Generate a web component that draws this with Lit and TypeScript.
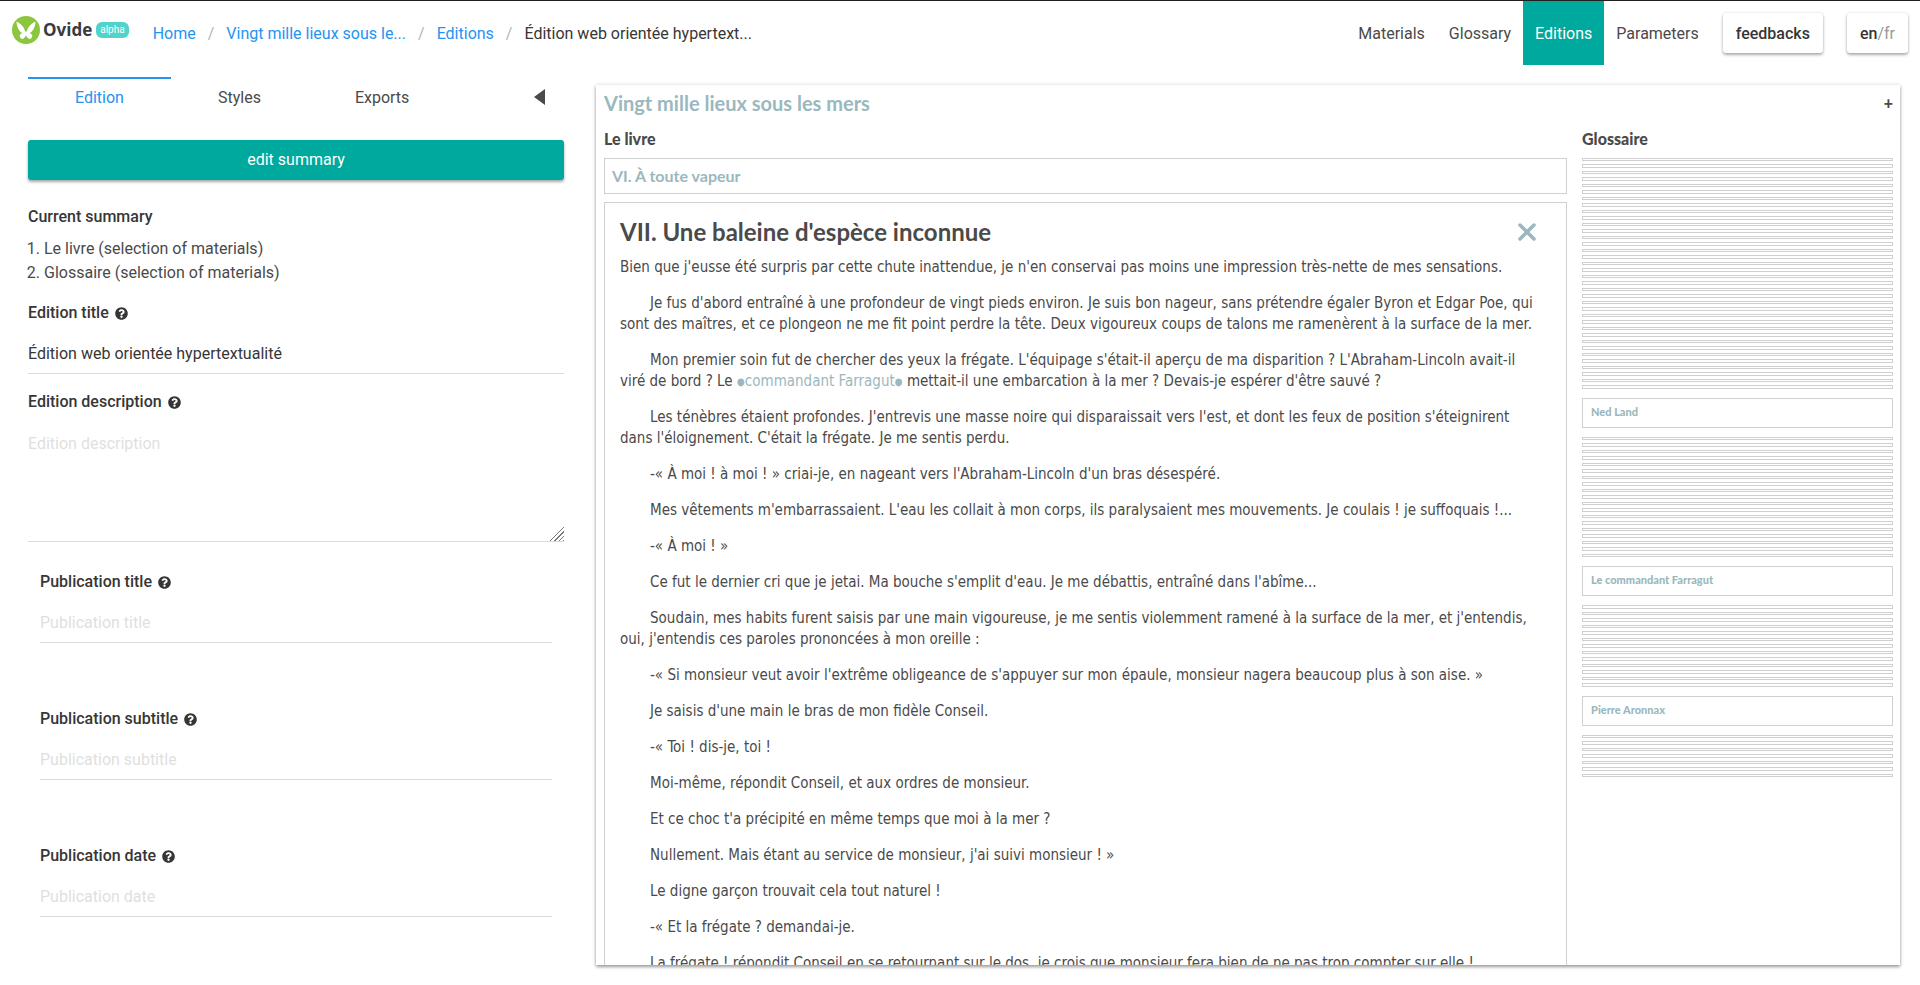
import { LitElement, html, svg, css, nothing } from "lit";
import { customElement, property } from "lit/decorators.js";

const CRUMBS = ["Home", "Vingt mille lieux sous le...", "Editions"];
const NAV = ["Materials", "Glossary", "Editions", "Parameters"];
const PUBLICATION_FIELDS = ["Publication title", "Publication subtitle", "Publication date"];

const dot = html`<span class="dot">●</span>`;

const PARAGRAPHS = [
  "Bien que j'eusse été surpris par cette chute inattendue, je n'en conservai pas moins une impression très-nette de mes sensations.",
  "Je fus d'abord entraîné à une profondeur de vingt pieds environ. Je suis bon nageur, sans prétendre égaler Byron et Edgar Poe, qui sont des maîtres, et ce plongeon ne me fit point perdre la tête. Deux vigoureux coups de talons me ramenèrent à la surface de la mer.",
  html`Mon premier soin fut de chercher des yeux la frégate. L'équipage s'était-il aperçu de ma disparition ? L'Abraham-Lincoln avait-il viré de bord ? Le <a class="entity" href="#farragut">${dot}commandant Farragut${dot}</a> mettait-il une embarcation à la mer ? Devais-je espérer d'être sauvé ?`,
  "Les ténèbres étaient profondes. J'entrevis une masse noire qui disparaissait vers l'est, et dont les feux de position s'éteignirent dans l'éloignement. C'était la frégate. Je me sentis perdu.",
  "-« À moi ! à moi ! » criai-je, en nageant vers l'Abraham-Lincoln d'un bras désespéré.",
  "Mes vêtements m'embarrassaient. L'eau les collait à mon corps, ils paralysaient mes mouvements. Je coulais ! je suffoquais !...",
  "-« À moi ! »",
  "Ce fut le dernier cri que je jetai. Ma bouche s'emplit d'eau. Je me débattis, entraîné dans l'abîme...",
  "Soudain, mes habits furent saisis par une main vigoureuse, je me sentis violemment ramené à la surface de la mer, et j'entendis, oui, j'entendis ces paroles prononcées à mon oreille :",
  "-« Si monsieur veut avoir l'extrême obligeance de s'appuyer sur mon épaule, monsieur nagera beaucoup plus à son aise. »",
  "Je saisis d'une main le bras de mon fidèle Conseil.",
  "-« Toi ! dis-je, toi !",
  "Moi-même, répondit Conseil, et aux ordres de monsieur.",
  "Et ce choc t'a précipité en même temps que moi à la mer ?",
  "Nullement. Mais étant au service de monsieur, j'ai suivi monsieur ! »",
  "Le digne garçon trouvait cela tout naturel !",
  "-« Et la frégate ? demandai-je.",
  "La frégate ! répondit Conseil en se retournant sur le dos, je crois que monsieur fera bien de ne pas trop compter sur elle !",
];

interface Group {
  bars: number;
  tallFirst?: boolean;
  entry?: string;
}

const GLOSSARY: Group[] = [
  { bars: 36, entry: "Ned Land" },
  { bars: 19, entry: "Le commandant Farragut" },
  { bars: 13, tallFirst: true, entry: "Pierre Aronnax" },
  { bars: 7 },
];

const helpIcon = svg`<svg class="help" viewBox="0 0 512 512" width="13" height="13" aria-hidden="true"><path fill="currentColor" d="M504 256c0 137-111 248-248 248S8 393 8 256 119 8 256 8s248 111 248 248zM262.700 90c-54.500 0-89.300 23-116.500 63.800-3.500 5.300-2.400 12.400 2.700 16.300l34.700 26.300c5.200 3.900 12.600 3 16.700-2.100 17.900-22.700 30.100-35.800 57.300-35.800 20.400 0 45.700 13.100 45.700 33 0 15-12.400 22.700-32.500 34C247.100 238.500 216 254.900 216 296v4c0 6.600 5.400 12 12 12h56c6.600 0 12-5.400 12-12v-1.300c0-28.500 83.200-29.600 83.200-106.700 0-58-60.200-102-116.500-102zM256 338c-25.400 0-46 20.600-46 46s20.600 46 46 46 46-20.600 46-46-20.600-46-46-46z"/></svg>`;

@customElement("top-bar")
export class TopBar extends LitElement {
  static styles = css`
    :host { display: block; }
    .bar { display: flex; align-items: stretch; justify-content: space-between; height: 64px; border-top: 1px solid #231f20; }
    .side { display: flex; align-items: stretch; }
    .brand { display: flex; align-items: center; gap: 3px; padding: 0 12px 6px; color: #363b45; text-decoration: none; font: 700 17px/24px "Open Sans", sans-serif; }
    .alpha { margin-left: 1px; padding: 0 4px; border-radius: 6px; background: #4fd3cb; color: #fff; font: 10px/16px Roboto, sans-serif; }
    .crumbs { display: flex; align-items: center; margin: 0; padding: 2px 0 0; list-style: none; }
    .crumb { display: flex; }
    .crumb a { padding: 0 12px; color: #2394f2; text-decoration: none; }
    .crumb + .crumb::before { content: "/"; color: #b5b5b5; }
    .crumb .here { color: #363636; }
    .nav { display: flex; align-items: stretch; }
    .link { display: flex; align-items: center; padding: 2px 12px 0; color: #4a4a4a; text-decoration: none; }
    .active { background: #00a99d; color: #fff; }
    .actions { display: flex; align-items: center; gap: 24px; padding: 0 12px; }
    button { height: 40px; padding: 2px 13px 0; border: 0; border-radius: 3px; background: #fff; box-shadow: 0 2px 3px rgba(0, 0, 0, 0.3), 0 0 3px rgba(0, 0, 0, 0.12); color: #363636; font: 500 16px/24px Roboto, sans-serif; }
    .off { color: #999; font-weight: 400; }
  `;

  render() {
    return html`<header class="bar">
      <div class="side">
        <a class="brand" href="#">
          <svg viewBox="0 0 28 28" width="28" height="28" aria-hidden="true">
            <circle cx="14" cy="14" r="14" fill="#8cc63f" />
            <path fill="#fff" d="M4.500 5.500C8 7 12 10.500 13.200 15.500h1.600C16 10.500 20 7 23.500 5.500c-.2 5-2.200 9.500-5.800 11.800 1.700.3 2.800 1.500 2.600 3-.2 1.500-1.500 2.700-3 2.600-1.300-.1-2.200-1.500-3.300-3.600-1.100 2.100-2 3.500-3.300 3.600-1.500.1-2.800-1.100-3-2.600-.2-1.500.9-2.700 2.600-3C6.700 15 4.700 10.500 4.500 5.500z" />
          </svg>
          <span>Ovide</span><span class="alpha">alpha</span>
        </a>
        <nav class="nav" aria-label="breadcrumb">
          <ul class="crumbs">
            ${CRUMBS.map((c) => html`<li class="crumb"><a href="#">${c}</a></li>`)}
            <li class="crumb"><a class="here" href="#" aria-current="page">Édition web orientée hypertext...</a></li>
          </ul>
        </nav>
      </div>
      <div class="side">
        <nav class="nav" aria-label="sections">
          ${NAV.map((n) => html`<a class="link ${n === "Editions" ? "active" : ""}" href="#">${n}</a>`)}
        </nav>
        <div class="actions">
          <button type="button">feedbacks</button>
          <button type="button">en<span class="off">/fr</span></button>
        </div>
      </div>
    </header>`;
  }
}

@customElement("edition-form")
export class EditionForm extends LitElement {
  static styles = css`
    :host { display: block; }
    .tabs { display: flex; align-items: stretch; margin-bottom: 23px; }
    .tab { height: 40px; padding: 0 47px; border: 0; border-top: 2px solid transparent; background: none; color: #4a4a4a; font: 16px/24px Roboto, sans-serif; }
    .tab.on { border-color: #2394f2; color: #2394f2; }
    .fold { display: flex; align-items: center; margin-left: auto; padding: 0 19px; border: 0; background: none; color: #4a4a4a; }
    .edit { display: block; width: 100%; height: 40px; border: 0; border-radius: 3px; background: #00a99d; box-shadow: 0 2px 3px rgba(0, 0, 0, 0.35); color: #fff; font: 16px/24px Roboto, sans-serif; }
    .title, label { display: flex; align-items: center; gap: 6px; margin: 0; color: #363636; font: 500 16px/24px Roboto, sans-serif; }
    .title { margin-top: 25px; }
    .summary { margin: 8px 0 16px; padding-left: 16px; }
    .field { margin-bottom: 16px; }
    .nested { margin-bottom: 40px; padding: 12px; }
    input, textarea { box-sizing: border-box; display: block; width: 100%; margin: 8px 0 0; padding: 8px 0; border: 0; border-bottom: 1px solid #dbdbdb; border-radius: 0; background: none; color: #363636; font: 16px/24px Roboto, sans-serif; outline: none; }
    input { height: 41px; }
    textarea { height: 120px; padding: 10px 0; resize: vertical; }
    textarea::-webkit-resizer { background: linear-gradient(135deg, #fff 52%, transparent 52%), repeating-linear-gradient(135deg, #fff 0 2px, #777 2px 3px); }
    ::placeholder { color: #dfdfdf; opacity: 1; }
    .help { flex: none; }
  `;

  private field(name: string, cls: string, value = "") {
    const id = name.toLowerCase().replace(/ /g, "-");
    return html`<div class="field ${cls}">
      <label for=${id}>${name} ${helpIcon}</label>
      <input id=${id} type="text" placeholder=${name} .value=${value} />
    </div>`;
  }

  render() {
    return html`
      <div class="tabs">
        <button type="button" class="tab on">Edition</button>
        <button type="button" class="tab">Styles</button>
        <button type="button" class="tab">Exports</button>
        <button type="button" class="fold" aria-label="Collapse">
          <svg width="11" height="16" viewBox="0 0 11 16" aria-hidden="true"><path d="M11 0v16L0 8z" fill="currentColor" /></svg>
        </button>
      </div>
      <button type="button" class="edit">edit summary</button>
      <h4 class="title">Current summary</h4>
      <ol class="summary">
        <li>Le livre (selection of materials)</li>
        <li>Glossaire (selection of materials)</li>
      </ol>
      ${this.field("Edition title", "", "Édition web orientée hypertextualité")}
      <div class="field">
        <label for="description">Edition description ${helpIcon}</label>
        <textarea id="description" placeholder="Edition description"></textarea>
      </div>
      ${PUBLICATION_FIELDS.map((f) => this.field(f, "nested"))}
    `;
  }
}

@customElement("edition-preview")
export class EditionPreview extends LitElement {
  @property({ attribute: false }) groups: Group[] = GLOSSARY;

  static styles = css`
    :host { display: block; box-sizing: border-box; min-height: 0; padding: 0 7px 0 8px; overflow: hidden; background: #fff; box-shadow: 0 2px 3px rgba(0, 0, 0, 0.35), 0 0 4px rgba(0, 0, 0, 0.14); color: #4a4a4a; font: 15px/21px "DejaVu Sans Condensed", "DejaVu Sans", sans-serif; }
    .head { display: flex; align-items: center; justify-content: space-between; height: 36px; }
    h1, h2, h3, .chapter, .entry, .more { font-family: Lato, sans-serif; font-weight: 700; }
    h1 { margin: 0; color: #9ab8be; font-size: 20px; line-height: 24px; }
    .more { padding: 0; border: 0; background: none; color: #4a4a4a; font-size: 16px; font-weight: 900; line-height: 24px; }
    .columns { display: grid; grid-template-columns: minmax(0, 963fr) minmax(0, 311fr); gap: 15px; align-items: start; }
    h2 { margin: 7px 0 9px; font-size: 16px; font-weight: 900; line-height: 21px; }
    .box { border: 1px solid #d0d0d0; }
    .chapter { display: block; margin-bottom: 8px; padding: 7px; color: #9ab8be; font-size: 16px; line-height: 20px; text-decoration: none; }
    .open { padding: 15px 30px 0 15px; }
    .row { display: flex; align-items: center; justify-content: space-between; margin-bottom: 11px; }
    h3 { margin: 0; font-size: 24px; line-height: 28px; }
    .close { display: flex; padding: 0; border: 0; background: none; color: #9ab8be; }
    p { margin: 0 0 15px; text-indent: 30px; }
    p:first-of-type { text-indent: 0; }
    .entity { color: #9ab8be; text-decoration: none; }
    .dot { font-size: 10px; line-height: 10px; vertical-align: 1px; }
    .bars { display: flex; flex-direction: column; gap: 3px; }
    .bar { box-sizing: border-box; height: 3px; }
    .bars .bar:nth-child(even) { height: 4px; }
    .tall .bar:nth-child(even) { height: 3px; }
    .tall .bar:nth-child(odd) { height: 4px; }
    .entry { display: block; margin: 9px 0; padding: 6px 8px 8px; color: #9ab8be; font-size: 11px; font-weight: 900; line-height: 14px; text-decoration: none; }
  `;

  render() {
    return html`
      <div class="head">
        <h1>Vingt mille lieux sous les mers</h1>
        <button type="button" class="more">+</button>
      </div>
      <div class="columns">
        <section>
          <h2>Le livre</h2>
          <a class="box chapter" href="#vi">VI. À toute vapeur</a>
          <article class="box open">
            <div class="row">
              <h3>VII. Une baleine d'espèce inconnue</h3>
              <button type="button" class="close" aria-label="Fermer">
                <svg width="18" height="18" viewBox="0 0 18 18" aria-hidden="true"><path d="M2 2l14 14M16 2L2 16" stroke="currentColor" stroke-width="3.500" stroke-linecap="round" /></svg>
              </button>
            </div>
            ${PARAGRAPHS.map((p) => html`<p>${p}</p>`)}
          </article>
        </section>
        <section>
          <h2>Glossaire</h2>
          ${this.groups.map(
            (g) => html`<div class="bars ${g.tallFirst ? "tall" : ""}">
                ${Array.from({ length: g.bars }, () => html`<div class="box bar"></div>`)}
              </div>
              ${g.entry ? html`<a class="box entry" href="#glossaire">${g.entry}</a>` : nothing}`,
          )}
        </section>
      </div>
    `;
  }
}

@customElement("app-root")
export class AppRoot extends LitElement {
  static styles = css`
    :host { display: flex; flex-direction: column; box-sizing: border-box; height: 100vh; overflow: hidden; background: #fff; color: #4a4a4a; font: 16px/24px Roboto, sans-serif; }
    .page { display: grid; grid-template-columns: minmax(0, 536fr) minmax(0, 1304fr); grid-template-rows: minmax(0, 1fr); gap: 32px; flex: 1; min-height: 0; padding: 0 20px 0 28px; }
    .form { padding-top: 12px; }
    .preview { margin: 20px 0; }
  `;

  render() {
    return html`
      <top-bar></top-bar>
      <main class="page">
        <edition-form class="form"></edition-form>
        <edition-preview class="preview"></edition-preview>
      </main>
    `;
  }
}
